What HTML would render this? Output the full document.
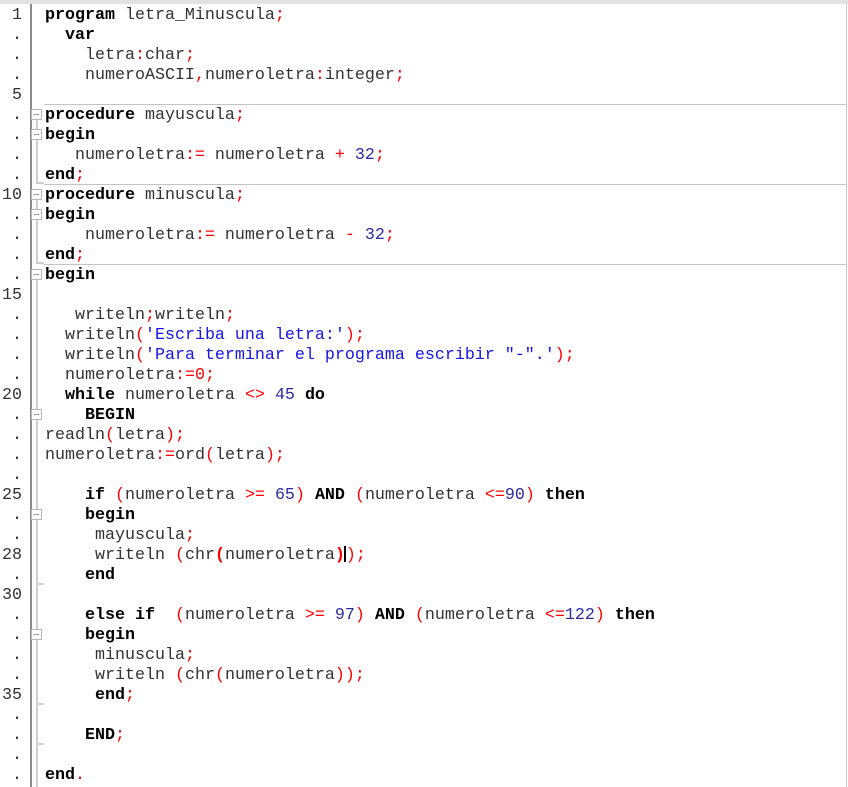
<!DOCTYPE html>
<html><head><meta charset="utf-8"><style>
body{margin:0;width:848px;height:787px;overflow:hidden;background:#fff;position:relative;font-family:"Liberation Mono","Courier New",monospace;}
.top{position:absolute;left:0;top:0;width:848px;height:4px;background:#e2e2e2;}
.rb{position:absolute;left:846px;top:4px;width:1px;height:783px;background:#c8c8c8;}
.gut{position:absolute;left:30px;top:4px;width:2px;height:783px;background:#8a8a8a;}
.ln{position:absolute;left:0;width:22px;text-align:right;font-size:16.67px;color:#333;line-height:20px;margin-top:2px;}
.c{position:absolute;left:45px;font-size:16.67px;line-height:20px;white-space:pre;color:#333;margin-top:2px;}
.k{color:#000;font-weight:bold}
.r{color:#f00}
.n{color:#2b2ba0}
.s{color:#1515e8}
.hl{position:absolute;left:44px;width:803px;height:1px;background:#c4c4c4;}
.fb{position:absolute;left:31px;width:9px;height:9px;border:1px solid #b8b8b8;background:#fff;}
.fb:after{content:"";position:absolute;left:2px;top:4px;width:5px;height:1px;background:#999;}
.fv{position:absolute;left:36px;width:2px;background:#d0d0d0;}
.ft{position:absolute;left:36px;width:8px;height:2px;background:#d0d0d0;}
.cur{display:inline-block;width:2px;height:16px;background:#000;vertical-align:-3px;margin-left:-1px;}
</style></head><body>
<div class="top"></div><div class="rb"></div><div class="gut"></div>
<div class="hl" style="top:104px"></div>
<div class="hl" style="top:184px"></div>
<div class="hl" style="top:264px"></div>

<div class="fv" style="top:115px;height:68px"></div><div class="ft" style="top:182px"></div>
<div class="fv" style="top:195px;height:68px"></div><div class="ft" style="top:262px"></div>
<div class="fv" style="top:275px;height:512px"></div>
<div class="ft" style="top:583px"></div>
<div class="ft" style="top:703px"></div>
<div class="ft" style="top:743px"></div>

<div class="fb" style="top:109px"></div>
<div class="fb" style="top:129px"></div>
<div class="fb" style="top:189px"></div>
<div class="fb" style="top:209px"></div>
<div class="fb" style="top:269px"></div>
<div class="fb" style="top:409px"></div>
<div class="fb" style="top:509px"></div>
<div class="fb" style="top:629px"></div>

<div class="ln" style="top:4px">1</div>
<div class="ln" style="top:24px">.</div>
<div class="ln" style="top:44px">.</div>
<div class="ln" style="top:64px">.</div>
<div class="ln" style="top:84px">5</div>
<div class="ln" style="top:104px">.</div>
<div class="ln" style="top:124px">.</div>
<div class="ln" style="top:144px">.</div>
<div class="ln" style="top:164px">.</div>
<div class="ln" style="top:184px">10</div>
<div class="ln" style="top:204px">.</div>
<div class="ln" style="top:224px">.</div>
<div class="ln" style="top:244px">.</div>
<div class="ln" style="top:264px">.</div>
<div class="ln" style="top:284px">15</div>
<div class="ln" style="top:304px">.</div>
<div class="ln" style="top:324px">.</div>
<div class="ln" style="top:344px">.</div>
<div class="ln" style="top:364px">.</div>
<div class="ln" style="top:384px">20</div>
<div class="ln" style="top:404px">.</div>
<div class="ln" style="top:424px">.</div>
<div class="ln" style="top:444px">.</div>
<div class="ln" style="top:464px">.</div>
<div class="ln" style="top:484px">25</div>
<div class="ln" style="top:504px">.</div>
<div class="ln" style="top:524px">.</div>
<div class="ln" style="top:544px">28</div>
<div class="ln" style="top:564px">.</div>
<div class="ln" style="top:584px">30</div>
<div class="ln" style="top:604px">.</div>
<div class="ln" style="top:624px">.</div>
<div class="ln" style="top:644px">.</div>
<div class="ln" style="top:664px">.</div>
<div class="ln" style="top:684px">35</div>
<div class="ln" style="top:704px">.</div>
<div class="ln" style="top:724px">.</div>
<div class="ln" style="top:744px">.</div>
<div class="ln" style="top:764px">.</div>

<div class="c" style="top:4px"><span class="k">program</span> letra_Minuscula<span class="r">;</span></div>
<div class="c" style="top:24px">  <span class="k">var</span></div>
<div class="c" style="top:44px">    letra<span class="r">:</span>char<span class="r">;</span></div>
<div class="c" style="top:64px">    numeroASCII<span class="r">,</span>numeroletra<span class="r">:</span>integer<span class="r">;</span></div>
<div class="c" style="top:104px"><span class="k">procedure</span> mayuscula<span class="r">;</span></div>
<div class="c" style="top:124px"><span class="k">begin</span></div>
<div class="c" style="top:144px">   numeroletra<span class="r">:=</span> numeroletra <span class="r">+</span> <span class="n">32</span><span class="r">;</span></div>
<div class="c" style="top:164px"><span class="k">end</span><span class="r">;</span></div>
<div class="c" style="top:184px"><span class="k">procedure</span> minuscula<span class="r">;</span></div>
<div class="c" style="top:204px"><span class="k">begin</span></div>
<div class="c" style="top:224px">    numeroletra<span class="r">:=</span> numeroletra <span class="r">-</span> <span class="n">32</span><span class="r">;</span></div>
<div class="c" style="top:244px"><span class="k">end</span><span class="r">;</span></div>
<div class="c" style="top:264px"><span class="k">begin</span></div>
<div class="c" style="top:304px">   writeln<span class="r">;</span>writeln<span class="r">;</span></div>
<div class="c" style="top:324px">  writeln<span class="r">(</span><span class="s">'Escriba una letra:'</span><span class="r">);</span></div>
<div class="c" style="top:344px">  writeln<span class="r">(</span><span class="s">'Para terminar el programa escribir "-".'</span><span class="r">);</span></div>
<div class="c" style="top:364px">  numeroletra<span class="r">:=0;</span></div>
<div class="c" style="top:384px">  <span class="k">while</span> numeroletra <span class="r">&lt;&gt;</span> <span class="n">45</span> <span class="k">do</span></div>
<div class="c" style="top:404px">    <span class="k">BEGIN</span></div>
<div class="c" style="top:424px">readln<span class="r">(</span>letra<span class="r">);</span></div>
<div class="c" style="top:444px">numeroletra<span class="r">:=</span>ord<span class="r">(</span>letra<span class="r">);</span></div>
<div class="c" style="top:484px">    <span class="k">if</span> <span class="r">(</span>numeroletra <span class="r">&gt;=</span> <span class="n">65</span><span class="r">)</span> <span class="k">AND</span> <span class="r">(</span>numeroletra <span class="r">&lt;=</span><span class="n">90</span><span class="r">)</span> <span class="k">then</span></div>
<div class="c" style="top:504px">    <span class="k">begin</span></div>
<div class="c" style="top:524px">     mayuscula<span class="r">;</span></div>
<div class="c" style="top:544px">     writeln <span class="r">(</span>chr<span class="r k">(</span>numeroletra<span class="r k">)</span><span class="cur"></span><span class="r">);</span></div>
<div class="c" style="top:564px">    <span class="k">end</span></div>
<div class="c" style="top:604px">    <span class="k">else if</span>  <span class="r">(</span>numeroletra <span class="r">&gt;=</span> <span class="n">97</span><span class="r">)</span> <span class="k">AND</span> <span class="r">(</span>numeroletra <span class="r">&lt;=</span><span class="n">122</span><span class="r">)</span> <span class="k">then</span></div>
<div class="c" style="top:624px">    <span class="k">begin</span></div>
<div class="c" style="top:644px">     minuscula<span class="r">;</span></div>
<div class="c" style="top:664px">     writeln <span class="r">(</span>chr<span class="r">(</span>numeroletra<span class="r">));</span></div>
<div class="c" style="top:684px">     <span class="k">end</span><span class="r">;</span></div>
<div class="c" style="top:724px">    <span class="k">END</span><span class="r">;</span></div>
<div class="c" style="top:764px"><span class="k">end</span><span class="r">.</span></div>
</body></html>
